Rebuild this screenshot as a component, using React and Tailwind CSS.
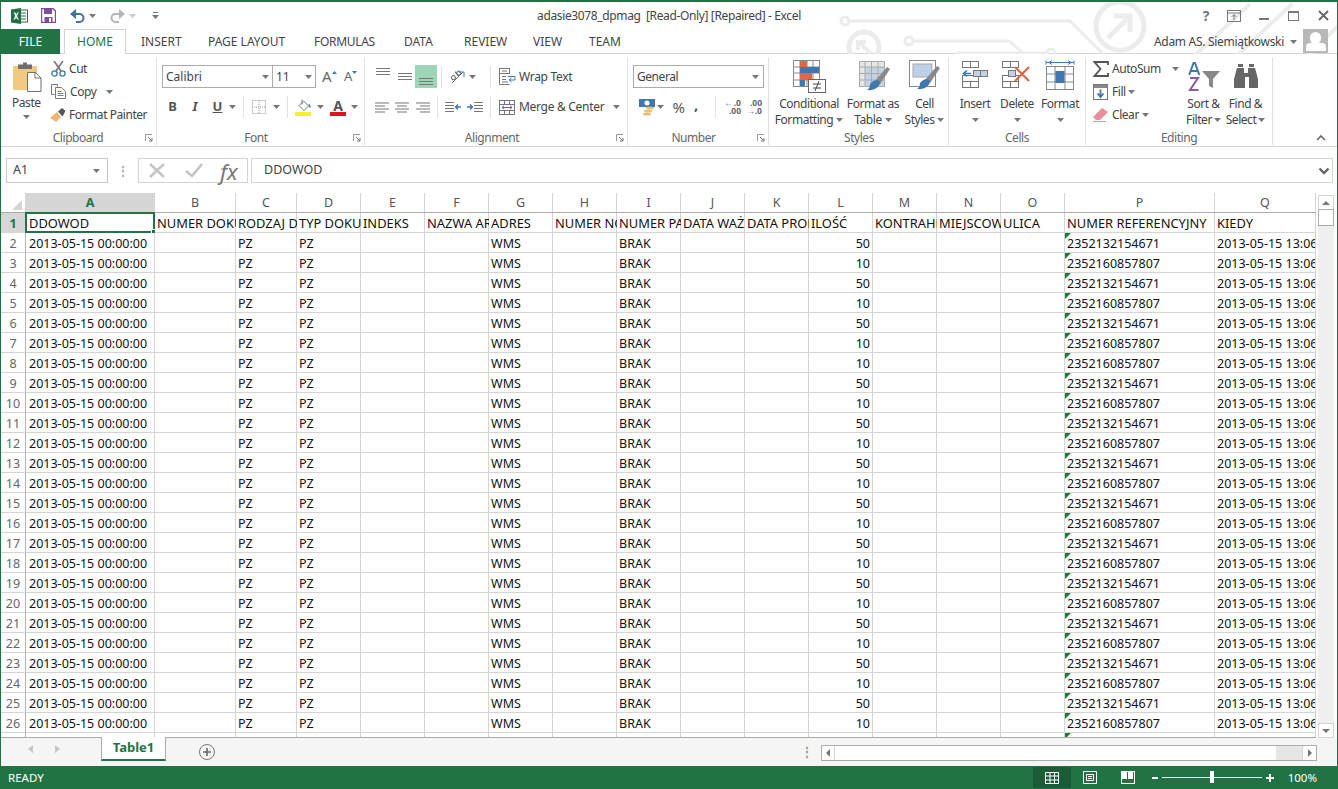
import React from "react";

const Caret = ({ className = "" }) => (
  <svg width="7" height="4" viewBox="0 0 7 4" className={"shrink-0 " + className}><path d="M0 0h7L3.5 4z" fill="#777" /></svg>
);
const Launcher = () => (
  <svg width="8" height="8" viewBox="0 0 8 8" className="shrink-0"><path d="M.5 7V.5H7" fill="none" stroke="#999" /><path d="M3 3l4 4M7 4v3H4" fill="none" stroke="#777" /></svg>
);
const VSep = ({ className = "" }) => <div className={"w-px h-[22px] bg-[#e1e1e1] shrink-0 " + className} />;

const Lines = ({ kind }) => {
  const rows = {
    left: [[0, 14], [0, 10], [0, 14], [0, 10]],
    center: [[0, 14], [2, 10], [0, 14], [2, 10]],
    right: [[0, 14], [4, 10], [0, 14], [4, 10]],
  }[kind];
  return (
    <svg width="14" height="11" viewBox="0 0 14 11">
      {rows.map(([x, w], i) => <rect key={i} x={x} y={i * 3 + 0.5} width={w} height="1" fill="#777" />)}
    </svg>
  );
};
const ThreeLines = () => (
  <svg width="14" height="7" viewBox="0 0 14 7"><path d="M0 .5h14M0 3.5h14M0 6.5h14" stroke="#777" /></svg>
);

const Excel = () => (
  <svg width="17" height="16" viewBox="0 0 17 16">
    <rect x="7" y="2" width="9.5" height="12" fill="#fff" stroke="#1e7145" />
    <path d="M10 5h5M10 8h5M10 11h5" stroke="#1e7145" />
    <path d="M0 1.5 10 0v16L0 14.5z" fill="#1e7145" />
    <path d="M2.6 4.5h1.7L5.2 6.7 6.2 4.5h1.6L6 8l1.9 3.6H6.2L5.1 9.2 4 11.6H2.4L4.3 8z" fill="#fff" />
  </svg>
);
const Save = () => (
  <svg width="15" height="15" viewBox="0 0 15 15">
    <path d="M.5.5h11.5l2.5 2.5v11.5H.5z" fill="#fff" stroke="#7d4e9f" strokeWidth="1.4" />
    <rect x="3" y="1" width="8" height="5" fill="#7d4e9f" />
    <rect x="3.5" y="9" width="8" height="5.5" fill="#7d4e9f" />
    <rect x="8" y="10" width="2" height="4" fill="#fff" />
  </svg>
);
const Undo = ({ c = "#44719e", flip }) => (
  <svg width="15" height="14" viewBox="0 0 15 14" className={flip ? "-scale-x-100" : ""}>
    <path d="M2 5h7.5a4 4 0 0 1 0 8H6" fill="none" stroke={c} strokeWidth="2" />
    <path d="M6 0v10L0 5z" fill={c} />
  </svg>
);
const Paste = () => (
  <svg width="29" height="31" viewBox="0 0 29 31">
    <rect x="0" y="5" width="24" height="24" rx="1" fill="#f1c983" />
    <path d="M5 3.5h5V1.5h4v2h5V8H5z" fill="#6f6f6f" />
    <path d="M14.5 11.5h8l5.5 5.5v13.5H14.5z" fill="#fff" stroke="#6f6f6f" />
    <path d="M22 11.5V17h6" fill="none" stroke="#6f6f6f" />
  </svg>
);
const Cut = () => (
  <svg width="15" height="16" viewBox="0 0 15 16">
    <path d="M3 0l7 10M12 0L5 10" stroke="#777" strokeWidth="1.6" />
    <circle cx="3.5" cy="12.5" r="2.6" fill="none" stroke="#3f78b0" strokeWidth="1.3" />
    <circle cx="11.5" cy="12.5" r="2.6" fill="none" stroke="#3f78b0" strokeWidth="1.3" />
  </svg>
);
const Copy = () => (
  <svg width="15" height="15" viewBox="0 0 15 15">
    <path d="M.5.5h6v2M.5.5v10h3" fill="none" stroke="#777" />
    <path d="M4.5 3.5h6l4 4v7h-10z" fill="#fff" stroke="#777" />
    <path d="M6.5 7.5h4M6.5 9.5h6M6.5 11.5h6" stroke="#5b86b1" />
  </svg>
);
const Painter = () => (
  <svg width="16" height="14" viewBox="0 0 16 14">
    <path d="M0 10 7 4l4 5-5 5C4 12 2 11 0 10z" fill="#eab672" />
    <path d="M8 3.5 12 0l3.5 3-3 5.5z" fill="#555" />
  </svg>
);
const Borders = () => (
  <svg width="14" height="14" viewBox="0 0 14 14">
    <rect x=".5" y=".5" width="13" height="13" fill="none" stroke="#999" strokeDasharray="1 1" />
    <path d="M7 0v14M0 7h14" stroke="#999" strokeDasharray="1 1" />
  </svg>
);
const FillColor = () => (
  <svg width="17" height="17" viewBox="0 0 17 17">
    <path d="M4 6.5 8.5 2l5 5L9 11.5z" fill="#fff" stroke="#777" />
    <path d="M7 .5v5" stroke="#777" />
    <path d="M13.5 4.5c2 1 2.5 3 2 4.5-1-.5-2-1.500-2-4.500z" fill="#4a7cb0" />
    <rect x="0" y="13" width="16" height="4" fill="#f5f02a" />
  </svg>
);
const FontColor = () => (
  <div className="flex flex-col items-center leading-none">
    <span className="text-[14px] font-bold h-[13px] leading-[13px] text-[#555]">A</span>
    <div className="w-[16px] h-[4px] bg-[#e3101a]" />
  </div>
);
const Orient = () => (
  <svg width="17" height="15" viewBox="0 0 17 15">
    <g transform="rotate(-40 7 7)" stroke="#666" fill="none">
      <circle cx="4" cy="6.500" r="2" />
      <path d="M9 3v5.500" />
      <circle cx="11" cy="6.500" r="2" />
    </g>
    <path d="M3 14 14 3" stroke="#666" />
    <path d="M10 3h5v5" fill="none" stroke="#4a7cb0" />
  </svg>
);
const Indent = ({ rev }) => (
  <svg width="16" height="11" viewBox="0 0 16 11" className={rev ? "-scale-x-100" : ""}>
    <path d="M7 .5h9M7 3.500h9M7 6.500h9M7 9.500h9" stroke="#777" />
    <path d="M0 5h5M3 2.500 5.500 5 3 7.500" fill="none" stroke="#3f78b0" strokeWidth="1.4" />
  </svg>
);
const Wrap = () => (
  <svg width="17" height="17" viewBox="0 0 17 17">
    <rect x=".5" y=".5" width="10" height="5" fill="#fff" stroke="#777" />
    <path d="M.5 5.500v11h10M3 3h5M3 8.500h4M3 11.500h4M3 14h6" fill="none" stroke="#777" />
    <path d="M9 8.500h7v3.500h-5M12.500 10 10 12l2.500 2" fill="none" stroke="#3f78b0" />
  </svg>
);
const Merge = () => (
  <svg width="16" height="15" viewBox="0 0 16 15">
    <rect x=".5" y=".5" width="15" height="14" fill="#fff" stroke="#777" />
    <path d="M0 4.500h16M0 10.500h16M5.500 0v4.500M10.500 0v4.500M5.500 10.500V15M10.500 10.500V15" stroke="#777" />
    <path d="M3 7.500h10M5 5.700 3 7.500l2 1.800M11 5.700l2 1.800-2 1.800" fill="none" stroke="#3f78b0" />
  </svg>
);
const Accounting = () => (
  <svg width="17" height="17" viewBox="0 0 17 17">
    <rect x="0" y="0" width="16" height="8" fill="#3f78b0" />
    <circle cx="8" cy="4" r="2.500" fill="#fff" />
    <ellipse cx="11" cy="9" rx="4" ry="1.500" fill="#e9c06f" />
    <ellipse cx="9" cy="12" rx="4" ry="1.500" fill="#e9c06f" />
    <ellipse cx="8" cy="15" rx="4" ry="1.500" fill="#e9c06f" />
  </svg>
);
const Dec = ({ more }) => (
  <div className="flex flex-col items-end text-[8.5px] leading-[8px] text-[#666] w-[16px] font-bold tracking-normal">
    <span className={"flex items-center " + (more ? "" : "gap-px")}>
      {more ? <span>.00</span> : <><span className="text-[#3f78b0]">←</span><span>.0</span></>}
    </span>
    <span className="flex items-center">
      {more ? <><span className="text-[#3f78b0]">→</span><span>.0</span></> : <span>.00</span>}
    </span>
  </div>
);

const Cond = () => (
  <svg width="33" height="33" viewBox="0 0 33 33">
    <g stroke="#888" fill="none"><rect x=".5" y=".5" width="26" height="26" fill="#fff" /><path d="M7 0v27M14 0v27M20 0v27M0 7h27M0 13h27M0 20h27" /></g>
    <rect x="7" y="1" width="7" height="6" fill="#d9694a" />
    <rect x="7" y="7" width="19" height="6" fill="#3f78b0" />
    <rect x="7" y="13" width="12" height="7" fill="#d9694a" />
    <rect x="7" y="20" width="5" height="6" fill="#3f78b0" />
    <rect x="15.500" y="19.500" width="17" height="13" fill="#fff" stroke="#666" />
    <path d="M20 24h8M20 28h8M22 31l4-10" stroke="#444" fill="none" />
  </svg>
);
const Brush = () => (
  <g>
    <path d="M16 20 28 6l3 2-10 15z" fill="#888" />
    <path d="M11 23c3-4 7-5 10 -2 0 5-6 9-13 8 2-1 3-3 3-6z" fill="#3f78b0" />
  </g>
);
const FormatTable = () => (
  <svg width="33" height="33" viewBox="0 0 33 33">
    <rect x=".5" y=".5" width="25" height="25" fill="#e6e6e6" stroke="#aaa" />
    <rect x="6" y="6" width="19" height="19" fill="#c3d3e6" />
    <path d="M6 0v26M12.500 0v26M19 0v26M0 6h26M0 12.500h26M0 19h26" stroke="#aaa" />
    <Brush />
  </svg>
);
const CellStyles = () => (
  <svg width="33" height="33" viewBox="0 0 33 33">
    <rect x=".5" y=".5" width="26" height="26" fill="#fff" stroke="#888" />
    <rect x="4" y="4" width="19" height="13" fill="#bcd0e8" stroke="#aaa" />
    <Brush />
  </svg>
);
const Ins = () => (
  <svg width="27" height="30" viewBox="0 0 27 30">
    <g fill="#fff" stroke="#777"><rect x=".5" y=".5" width="8" height="6" /><rect x="8.500" y=".5" width="8" height="6" /><rect x=".5" y="20.500" width="8" height="6" /><rect x="8.500" y="20.500" width="8" height="6" /><rect x=".5" y="14.500" width="16" height="6" fill="none" /></g>
    <rect x="11.500" y="9.500" width="7" height="6" fill="#c2d3e6" stroke="#777" />
    <rect x="18.500" y="9.500" width="7" height="6" fill="#c2d3e6" stroke="#777" />
    <path d="M2 12.500h7M5 9.500l-3.500 3 3.500 3" fill="none" stroke="#3f78b0" strokeWidth="1.600" />
  </svg>
);
const Del = () => (
  <svg width="30" height="30" viewBox="0 0 30 30">
    <g fill="#fff" stroke="#777"><rect x=".5" y=".5" width="8" height="6" /><rect x="8.500" y=".5" width="8" height="6" /><rect x=".5" y="20.500" width="8" height="6" /><rect x="8.500" y="20.500" width="8" height="6" /><rect x=".5" y="14.500" width="16" height="6" fill="none" /></g>
    <rect x="6.500" y="9.500" width="7" height="6" fill="#c2d3e6" stroke="#777" />
    <path d="M13 6l14 14M27 6 13 20" stroke="#d9694a" strokeWidth="2.200" />
  </svg>
);
const Fmt = () => (
  <svg width="30" height="33" viewBox="0 0 30 33">
    <path d="M1 2.500h28M1 .5v4M29 .5v4M4 2.500l3-2M4 2.500l3 2M26 2.500l-3-2M26 2.500l-3 2" stroke="#3f78b0" fill="none" />
    <rect x="1.500" y="6.500" width="27" height="23" fill="#fff" stroke="#888" />
    <path d="M10 6v24M20 6v24M1 14h28M1 22h28" stroke="#888" />
    <rect x="10.500" y="11" width="9" height="12" fill="#3f78b0" />
  </svg>
);
const Sigma = () => (
  <svg width="16" height="16" viewBox="0 0 16 16"><path d="M15 4V1H1.500l6 7-6 7H15v-3" fill="none" stroke="#555" strokeWidth="1.800" /></svg>
);
const FillI = () => (
  <svg width="15" height="16" viewBox="0 0 15 16">
    <rect x=".5" y=".5" width="14" height="15" fill="#fff" stroke="#777" />
    <rect x="1" y="1" width="13" height="3" fill="#888" />
    <path d="M7.500 5.500v7M4.500 9.500l3 3.500 3-3.500" fill="none" stroke="#3f78b0" strokeWidth="1.800" />
  </svg>
);
const Eraser = () => (
  <svg width="15" height="15" viewBox="0 0 15 15">
    <path d="M0 10 9 1l6 4-8 8H3z" fill="#e8909c" />
    <path d="M0 14.500h13" stroke="#aaa" />
  </svg>
);
const Sort = () => (
  <svg width="32" height="31" viewBox="0 0 32 31">
    <path d="M1.200 13 5.500 1h1.500L11.300 13M3 9h6.500" fill="none" stroke="#3f78b0" strokeWidth="2" />
    <path d="M2 16h8L2 28h8.500" fill="none" stroke="#8d5aa6" strokeWidth="2" />
    <path d="M14 9h18l-7 8v9l-4-2v-7z" fill="#888" />
  </svg>
);
const Binoc = () => (
  <svg width="26" height="27" viewBox="0 0 26 27" fill="#666">
    <path d="M5 1h5v3H5zM16 1h5v3h-5z" />
    <path d="M4 5h7v5h4V5h7l3 11v9h-9V14h-4v11H1v-9z" />
  </svg>
);

const colWidths = "grid grid-cols-[25px_129px_81px_61px_64px_64px_64px_64px_64px_64px_64px_64px_64px_64px_64px_64px_150px_101px]";
const letters = "ABCDEFGHIJKLMNOPQ".split("");
const heads = ["DDOWOD", "NUMER DOKUMENTU", "RODZAJ DOKUMENTU", "TYP DOKUMENTU", "INDEKS", "NAZWA ARTYKUŁU", "ADRES", "NUMER NOŚNIKA", "NUMER PARTII", "DATA WAŻNOŚCI", "DATA PRODUKCJI", "ILOŚĆ", "KONTRAHENT", "MIEJSCOWOŚĆ", "ULICA", "NUMER REFERENCYJNY", "KIEDY"];
const qty = [50, 10, 50, 10, 50, 10, 10, 50, 10, 50, 10, 50, 10, 50, 10, 50, 10, 50, 10, 50, 10, 50, 10, 50, 10];

const Cell = ({ children, className = "" }) => (
  <div className={"relative h-[20px] border-r border-b border-[#d4d4d4] overflow-hidden whitespace-nowrap text-[12.5px] text-[#111] " + className}>{children}</div>
);
const Tri = () => <svg width="6" height="6" viewBox="0 0 6 6" className="absolute left-0 top-0"><path d="M0 0h6L0 6z" fill="#1e7b34" /></svg>;

const DataRow = ({ n, q }) => {
  const cols = { 2: "PZ", 3: "PZ", 6: "WMS", 8: "BRAK" };
  return (
    <div className={colWidths}>
      <div className="h-[20px] border-r border-b border-[#d4d4d4] border-r-[#b5b5b5] text-center leading-[21px] text-[12.5px] text-[#666]">{n}</div>
      {letters.map((l, i) => {
        if (i === 0) return <Cell key={l} className="pl-[3px] leading-[22px]">2013-05-15 00:00:00</Cell>;
        if (i === 11) return <Cell key={l} className="text-right pr-[2px] leading-[22px]">{q}</Cell>;
        if (i === 15) return <Cell key={l} className="pl-[2px] leading-[22px]"><Tri />{q === 50 ? "2352132154671" : "2352160857807"}</Cell>;
        if (i === 16) return <Cell key={l} className="pl-[2px] leading-[22px]">2013-05-15 13:06:00</Cell>;
        return <Cell key={l} className="pl-[2px] leading-[22px]">{cols[i]}</Cell>;
      })}
    </div>
  );
};

export default function App() {
  return (
    <div className="w-[1338px] h-[789px] flex flex-col overflow-hidden bg-white border-x border-t-2 border-[#217346] font-['Noto_Sans','Open_Sans',sans-serif] text-[#444]">
      {/* title + tabs */}
      <div className="relative h-[52px] shrink-0 border-b border-[#d4d4d4]">
        <svg width="1338" height="52" viewBox="0 -2 1338 52" className="absolute left-[-1px] top-0" fill="none" stroke="#ececec" strokeWidth="3">
          <circle cx="845" cy="17" r="4" />
          <path d="M849 17h221l40 40" />
          <circle cx="864" cy="43" r="15" strokeWidth="5" />
          <path d="M871 50l-12-12M858 46v-8h8" strokeWidth="4" />
          <circle cx="909" cy="37" r="4" />
          <path d="M913 37h96l30 25" />
          <circle cx="1051" cy="49" r="4" />
          <path d="M1047 49h-89l-12 12" />
          <circle cx="1120" cy="22" r="24" strokeWidth="5" />
          <path d="M1108 34l22-22M1114 12h16v16" strokeWidth="5" />
          <path d="M1186 60 1250 0M1228 60l64-60M1300 60l50-50" strokeWidth="4" />
        </svg>
        <div className="relative h-[27px] grid grid-cols-[1fr_auto_1fr] items-center">
          <div className="flex items-center pl-[10px]">
            <Excel />
            <div className="ml-[13px]"><Save /></div>
            <div className="ml-[14px]"><Undo /></div>
            <Caret className="ml-[4px]" />
            <div className="ml-[14px]"><Undo c="#b5b5b5" flip /></div>
            <Caret className="ml-[4px] opacity-40" />
            <div className="ml-[16px] flex flex-col items-center gap-[2px]">
              <div className="w-[5px] h-px bg-[#777]" />
              <Caret />
            </div>
          </div>
          <div className="text-[12px] tracking-[-0.37px] text-[#444] whitespace-pre">adasie3078_dpmag  [Read-Only] [Repaired] - Excel</div>
          <div className="flex items-center justify-end pr-[8px] text-[#777]">
            <span className="text-[14px] font-bold w-[14px] text-center">?</span>
            <svg width="14" height="12" viewBox="0 0 14 12" className="ml-[14px]"><rect x=".5" y=".5" width="13" height="11" fill="none" stroke="#777" /><path d="M0 3h14M7 10V5M4.500 7 7 4.500 9.500 7" fill="none" stroke="#777" /></svg>
            <div className="w-[10px] h-[2px] bg-[#777] ml-[18px] mt-[6px]" />
            <div className="w-[11px] h-[10px] border border-t-2 border-[#777] ml-[19px]" />
            <svg width="11" height="11" viewBox="0 0 11 11" className="ml-[19px]"><path d="M1 1l9 9M10 1l-9 9" stroke="#666" strokeWidth="1.800" /></svg>
          </div>
        </div>
        <div className="relative h-[25px] flex text-[12px] text-[#444]">
          <div className="w-[59px] h-[25px] bg-[#217346] text-white flex items-center justify-center">FILE</div>
          <div className="ml-[4px] w-[62px] h-[25px] bg-white border border-b-0 border-[#d4d4d4] text-[#217346] flex items-center justify-center">HOME</div>
          <div className="ml-[15px] w-[37px] leading-[25px] h-[24px]">INSERT</div>
          <div className="ml-[30px] w-[78px] leading-[25px] h-[24px] whitespace-nowrap">PAGE LAYOUT</div>
          <div className="ml-[28px] w-[62px] leading-[25px] h-[24px] tracking-[-0.3px]">FORMULAS</div>
          <div className="ml-[28px] w-[32px] leading-[25px] h-[24px]">DATA</div>
          <div className="ml-[28px] w-[40px] leading-[25px] h-[24px]">REVIEW</div>
          <div className="ml-[29px] w-[28px] leading-[25px] h-[24px]">VIEW</div>
          <div className="ml-[28px] w-[32px] leading-[25px] h-[24px]">TEAM</div>
          <div className="flex-1 flex items-start justify-end">
            <span className="leading-[25px] whitespace-nowrap text-[#444] tracking-[-0.3px]">Adam AS. Siemiątkowski</span>
            <Caret className="ml-[6px] mt-[11px]" />
            <div className="ml-[6px] mr-[9px] w-[25px] h-[24px] bg-[#b8b8b8] flex flex-col items-center overflow-hidden">
              <div className="w-[11px] h-[12px] rounded-full bg-white mt-[3px]" />
              <div className="w-[20px] h-[8px] bg-white rounded-t-[4px] mt-[-1px]" />
            </div>
          </div>
        </div>
      </div>

      {/* ribbon */}
      <div className="h-[93px] shrink-0 flex border-b border-[#d4d4d4] bg-white text-[12px] tracking-[-0.45px] text-[#444] pt-[3px] pb-[1px]">
        {/* Clipboard */}
        <div className="w-[156px] shrink-0 flex flex-col border-r border-[#e1e1e1]">
          <div className="flex-1 min-h-0 flex pl-[12px]">
            <div className="w-[38px] flex flex-col items-start">
              <div className="mt-[4px]"><Paste /></div>
              <span className="leading-[14px] mt-[4px] -ml-px">Paste</span>
              <Caret className="ml-[10px] mt-[5px]" />
            </div>
            <div className="flex flex-col">
              <div className="h-[23px] flex items-center"><Cut /><span className="ml-[3px]">Cut</span></div>
              <div className="h-[23px] flex items-center"><Copy /><span className="ml-[4px]">Copy</span><Caret className="ml-[10px]" /></div>
              <div className="h-[23px] flex items-center -ml-[1px]"><Painter /><span className="ml-[3px] whitespace-nowrap">Format Painter</span></div>
            </div>
          </div>
          <div className="h-[14px] flex items-center pr-[3px] text-[#666]"><span className="flex-1 text-center pl-[10px]">Clipboard</span><Launcher /></div>
        </div>
        {/* Font */}
        <div className="w-[208px] shrink-0 flex flex-col border-r border-[#e1e1e1]">
          <div className="flex-1 min-h-0 flex flex-col pl-[5px] pt-[8px]">
            <div className="flex items-center h-[23px] tracking-normal">
              <div className="w-[111px] h-[23px] border border-[#ababab] flex items-center pl-[3px] pr-[3px] justify-between"><span>Calibri</span><Caret /></div>
              <div className="w-[43px] h-[23px] border border-l-0 border-[#ababab] flex items-center pl-[3px] pr-[3px] justify-between"><span>11</span><Caret /></div>
              <div className="ml-[6px] flex w-[22px] items-center text-[15px] text-[#666]">A<svg width="5" height="3" viewBox="0 0 5 3" className="mb-[8px]"><path d="M0 3h5L2.500 0z" fill="#3f78b0" /></svg></div>
              <div className="flex w-[20px] items-center text-[13px] text-[#666]">A<svg width="5" height="3" viewBox="0 0 5 3" className="mb-[8px]"><path d="M0 0h5L2.500 3z" fill="#3f78b0" /></svg></div>
            </div>
            <div className="flex items-center h-[22px] mt-[8px] tracking-normal">
              <span className="w-[21px] text-center font-bold text-[13px] text-[#555]">B</span>
              <span className="w-[24px] text-center italic text-[13px] text-[#555] font-['Liberation_Serif',serif] font-bold">I</span>
              <span className="w-[21px] text-center font-bold underline text-[13px] text-[#555]">U</span>
              <Caret className="ml-[1px]" />
              <VSep className="ml-[7px]" />
              <div className="ml-[8px]"><Borders /></div>
              <Caret className="ml-[7px]" />
              <VSep className="ml-[7px]" />
              <div className="ml-[7px]"><FillColor /></div>
              <Caret className="ml-[5px]" />
              <div className="ml-[6px]"><FontColor /></div>
              <Caret className="ml-[5px]" />
            </div>
          </div>
          <div className="h-[14px] flex items-center pr-[3px] text-[#666]"><span className="flex-1 text-center pl-[2px]">Font</span><Launcher /></div>
        </div>
        {/* Alignment */}
        <div className="w-[263px] shrink-0 flex flex-col border-r border-[#e1e1e1]">
          <div className="flex-1 min-h-0 flex pt-[8px] pl-[7px]">
            <div className="w-[119px] flex flex-col">
              <div className="flex items-center h-[23px]">
                <div className="w-[22px] flex justify-center items-start self-stretch pt-[3px]"><ThreeLines /></div>
                <div className="w-[22px] flex justify-center items-center self-stretch"><ThreeLines /></div>
                <div className="w-[22px] bg-[#9fd5b7] flex justify-center items-end self-stretch pb-[3px]"><ThreeLines /></div>
                <VSep className="ml-[4px]" />
                <div className="ml-[7px]"><Orient /></div>
                <Caret className="ml-[3px]" />
                <VSep className="ml-[14px]" />
              </div>
              <div className="flex items-center h-[22px] mt-[8px]">
                <div className="w-[22px] flex justify-center"><Lines kind="left" /></div>
                <div className="w-[22px] flex justify-center"><Lines kind="center" /></div>
                <div className="w-[22px] flex justify-center"><Lines kind="right" /></div>
                <VSep className="ml-[4px]" />
                <div className="ml-[7px]"><Indent rev /></div>
                <div className="ml-[6px]"><Indent /></div>
                <VSep className="ml-[7px]" />
              </div>
            </div>
            <div className="flex flex-col pl-[8px]">
              <div className="flex items-center h-[23px]"><Wrap /><span className="ml-[3px] whitespace-nowrap tracking-[-0.3px]">Wrap Text</span></div>
              <div className="flex items-center h-[22px] mt-[8px]"><Merge /><span className="ml-[4px] whitespace-nowrap tracking-[-0.3px]">Merge &amp; Center</span><Caret className="ml-[9px]" /></div>
            </div>
          </div>
          <div className="h-[14px] flex items-center pr-[3px] text-[#666]"><span className="flex-1 text-center pl-[3px]">Alignment</span><Launcher /></div>
        </div>
        {/* Number */}
        <div className="w-[141px] shrink-0 flex flex-col border-r border-[#e1e1e1]">
          <div className="flex-1 min-h-0 flex flex-col pl-[5px] pt-[8px]">
            <div className="w-[131px] h-[23px] border border-[#ababab] flex items-center pl-[3px] pr-[4px] justify-between"><span>General</span><Caret /></div>
            <div className="flex items-center h-[22px] mt-[8px]">
              <div className="ml-[6px]"><Accounting /></div>
              <Caret className="ml-[1px]" />
              <span className="ml-[7px] text-[15px] w-[15px] text-center text-[#555]">%</span>
              <span className="ml-[8px] text-[15px] w-[8px] font-bold text-[#555] leading-none -mt-[6px]">,</span>
              <VSep className="ml-[13px]" />
              <div className="ml-[9px]"><Dec /></div>
              <div className="ml-[5px]"><Dec more /></div>
            </div>
          </div>
          <div className="h-[14px] flex items-center pr-[3px] text-[#666]"><span className="flex-1 text-center pl-[2px]">Number</span><Launcher /></div>
        </div>
        {/* Styles */}
        <div className="w-[180px] shrink-0 flex flex-col border-r border-[#e1e1e1]">
          <div className="flex-1 min-h-0 flex leading-[16px] text-center pl-[6px]">
            <div className="w-[68px] flex flex-col items-center">
              <div className="h-[37px] pt-[3px]"><Cond /></div>
              <span className="mt-[2px]">Conditional</span>
              <span className="flex items-center gap-[3px]">Formatting<Caret /></span>
            </div>
            <div className="w-[60px] flex flex-col items-center">
              <div className="h-[37px] pt-[4px] pl-[5px]"><FormatTable /></div>
              <span className="mt-[2px] whitespace-nowrap">Format as</span>
              <span className="flex items-center gap-[3px]">Table<Caret /></span>
            </div>
            <div className="w-[43px] flex flex-col items-center">
              <div className="h-[37px] pt-[3px] pl-[1px]"><CellStyles /></div>
              <span className="mt-[2px]">Cell</span>
              <span className="flex items-center gap-[3px]">Styles<Caret /></span>
            </div>
          </div>
          <div className="h-[14px] flex items-center justify-center text-[#666] pl-[1px]">Styles</div>
        </div>
        {/* Cells */}
        <div className="w-[137px] shrink-0 flex flex-col border-r border-[#e1e1e1]">
          <div className="flex-1 min-h-0 flex leading-[16px] pl-[7px]">
            <div className="w-[38px] flex flex-col items-center">
              <div className="h-[37px] pt-[4px]"><Ins /></div>
              <span className="mt-[2px]">Insert</span>
              <Caret className="mt-[6px]" />
            </div>
            <div className="w-[46px] flex flex-col items-center">
              <div className="h-[37px] pt-[4px]"><Del /></div>
              <span className="mt-[2px]">Delete</span>
              <Caret className="mt-[6px]" />
            </div>
            <div className="w-[40px] flex flex-col items-center">
              <div className="h-[37px] pt-[3px]"><Fmt /></div>
              <span className="mt-[2px]">Format</span>
              <Caret className="mt-[6px]" />
            </div>
          </div>
          <div className="h-[14px] flex items-center justify-center text-[#666]">Cells</div>
        </div>
        {/* Editing */}
        <div className="w-[187px] shrink-0 flex flex-col border-r border-[#e1e1e1]">
          <div className="flex-1 min-h-0 flex pl-[7px]">
            <div className="w-[90px] flex flex-col">
              <div className="h-[23px] flex items-center"><Sigma /><span className="ml-[3px]">AutoSum</span><Caret className="ml-[11px]" /></div>
              <div className="h-[23px] flex items-center"><FillI /><span className="ml-[4px]">Fill</span><Caret className="ml-[2px]" /></div>
              <div className="h-[23px] flex items-center"><Eraser /><span className="ml-[4px]">Clear</span><Caret className="ml-[3px]" /></div>
            </div>
            <div className="w-[41px] flex flex-col items-center leading-[16px]">
              <div className="h-[37px] pt-[5px]"><Sort /></div>
              <span className="mt-[2px] whitespace-nowrap">Sort &amp;</span>
              <span className="flex items-center gap-[2px]">Filter<Caret /></span>
            </div>
            <div className="w-[43px] flex flex-col items-center leading-[16px]">
              <div className="h-[37px] pt-[6px]"><Binoc /></div>
              <span className="mt-[2px] whitespace-nowrap">Find &amp;</span>
              <span className="flex items-center gap-[2px]">Select<Caret /></span>
            </div>
          </div>
          <div className="h-[14px] flex items-center justify-center text-[#666]">Editing</div>
        </div>
        <div className="flex-1 flex items-end justify-end pr-[11px] pb-[4px]">
          <svg width="10" height="6" viewBox="0 0 10 6"><path d="M1 5l4-4 4 4" fill="none" stroke="#666" strokeWidth="1.600" /></svg>
        </div>
      </div>

      {/* formula bar */}
      <div className="h-[46px] shrink-0 flex items-start pt-[11px] pl-[5px] text-[12px] text-[#444]">
        <div className="w-[102px] h-[25px] border border-[#c6c6c6] flex items-center justify-between pl-[6px] pr-[7px] text-[12.5px]"><span>A1</span><Caret /></div>
        <div className="w-[30px] h-[25px] flex items-center justify-center text-[#aaa] font-bold tracking-tighter">⋮</div>
        <div className="w-[110px] h-[25px] border border-[#d4d4d4] flex items-center pl-[9px]">
          <svg width="18" height="15" viewBox="0 0 18 15"><path d="M2 1l14 13M16 1 2 14" stroke="#c4c4c4" strokeWidth="2.400" /></svg>
          <svg width="20" height="15" viewBox="0 0 20 15" className="ml-[18px]"><path d="M2 8l6 5L18 1" fill="none" stroke="#c4c4c4" strokeWidth="2.600" /></svg>
          <span className="ml-[16px] font-['Liberation_Serif',serif] italic font-normal text-[22px] text-[#777] leading-none">fx</span>
        </div>
        <div className="ml-[3px] w-[1082px] h-[25px] border border-[#d4d4d4] flex items-center justify-between pl-[12px] pr-[2px] text-[12.5px]">
          <span>DDOWOD</span>
          <svg width="12" height="8" viewBox="0 0 12 8"><path d="M1.500 1.500 6 6l4.500-4.500" fill="none" stroke="#666" strokeWidth="2.400" /></svg>
        </div>
      </div>

      {/* sheet */}
      <div className="flex-1 min-h-0 flex overflow-hidden">
        <div className="w-[1315px] shrink-0 flex flex-col overflow-hidden border-b border-[#ababab]">
          <div className={colWidths + " h-[20px] shrink-0 border-b border-[#ababab]"}>
            <div className="border-r border-[#d4d4d4] flex items-end justify-end pr-[3px] pb-[2px]">
              <svg width="10" height="10" viewBox="0 0 10 10"><path d="M10 0v10H0z" fill="#d4d4d4" /></svg>
            </div>
            {letters.map((l) => (
              <div key={l} className={"border-r border-[#d4d4d4] text-center leading-[19px] text-[12.5px] " + (l === "A" ? "bg-[#d6d6d6] text-[#217346] font-bold" : "text-[#555]")}>{l}</div>
            ))}
          </div>
          <div className={colWidths}>
            <div className="h-[20px] bg-[#d6d6d6] border-r border-[#b5b5b5] text-center leading-[21px] text-[12.5px] font-bold text-[#217346]">1</div>
            {heads.map((h, i) => (
              <Cell key={h} className={"!overflow-visible !text-[12.9px] leading-[20px] " + (i === 0 ? "pl-[3px]" : "pl-[2px]")}>
                <div className={"overflow-hidden -mr-[1px]"}>{h}</div>
                {i === 0 && (
                  <div className="absolute -left-[1px] -top-[1px] w-[130px] h-[21px] border-2 border-[#217346]">
                    <div className="absolute -right-[3px] -bottom-[3px] w-[5px] h-[5px] bg-[#217346] border border-white" />
                  </div>
                )}
              </Cell>
            ))}
          </div>
          {qty.map((q, i) => <DataRow key={i} n={i + 2} q={q} />)}
          <div className={colWidths + " h-[5px] overflow-hidden shrink-0"}>
            <div className="border-r border-[#b5b5b5]" />
            {letters.map((l, i) => (
              <div key={l} className="relative border-r border-[#d4d4d4]">{i === 15 && <Tri />}</div>
            ))}
          </div>
        </div>
        <div className="w-[21px] shrink-0 pl-[2px] pt-[2px] flex flex-col">
          <div className="flex-1 flex flex-col w-[16px] bg-[#f0f0f0]">
            <div className="h-[15px] bg-white border border-[#d4d4d4] flex items-center justify-center"><svg width="8" height="4" viewBox="0 0 8 4"><path d="M0 4h8L4 0z" fill="#777" /></svg></div>
            <div className="h-[17px] bg-white border border-[#ababab] -mt-px" />
            <div className="flex-1" />
            <div className="h-[15px] bg-white border border-[#d4d4d4] flex items-center justify-center"><svg width="8" height="4" viewBox="0 0 8 4"><path d="M0 0h8L4 4z" fill="#777" /></svg></div>
          </div>
        </div>
      </div>

      {/* sheet tabs */}
      <div className="h-[28px] shrink-0 bg-[#f5f5f5] flex items-start text-[12px]">
        <div className="w-[100px] h-[22px] flex items-center pl-[27px] gap-[22px]">
          <svg width="5" height="8" viewBox="0 0 5 8"><path d="M5 0v8L0 4z" fill="#c8c8c8" /></svg>
          <svg width="5" height="8" viewBox="0 0 5 8"><path d="M0 0v8l5-4z" fill="#c8c8c8" /></svg>
        </div>
        <div className="w-[65px] h-[24px] -mt-px bg-white border-x border-[#ababab] border-b-2 border-b-[#217346] flex items-center justify-center font-bold text-[13px] text-[#217346]">Table1</div>
        <div className="ml-[33px] mt-[6px] w-[16px] h-[16px] border border-[#777] rounded-full flex items-center justify-center">
          <svg width="10" height="10" viewBox="0 0 10 10"><path d="M5 1v8M1 5h8" stroke="#666" strokeWidth="1.600" /></svg>
        </div>
        <div className="ml-[586px] mt-[7px] w-[6px] text-center text-[#999] leading-[14px] font-bold">⋮</div>
        <div className="ml-[14px] mt-[7px] w-[496px] h-[16px] border border-[#ababab] flex">
          <div className="w-[13px] border-r border-[#d4d4d4] flex items-center justify-center bg-white"><svg width="4" height="8" viewBox="0 0 4 8"><path d="M4 0v8L0 4z" fill="#777" /></svg></div>
          <div className="w-[441px] bg-white" />
          <div className="flex-1 bg-[#e6e6e6]" />
          <div className="w-[14px] border-l border-[#d4d4d4] flex items-center justify-center bg-white"><svg width="4" height="8" viewBox="0 0 4 8"><path d="M0 0v8l4-4z" fill="#777" /></svg></div>
        </div>
      </div>

      {/* status bar */}
      <div className="h-[23px] shrink-0 bg-[#217346] flex items-center text-[11.5px] text-white -mx-px px-[8px]">
        <span>READY</span>
        <div className="flex-1" />
        <div className="w-[38px] h-[21px] bg-[#1a5c38] flex items-center justify-center">
          <svg width="14" height="12" viewBox="0 0 14 12"><path d="M.5.500h13v11H.500zM5 .5v11M9.500 .5v11M0 4h14M0 8h14" fill="none" stroke="#fff" /></svg>
        </div>
        <svg width="14" height="13" viewBox="0 0 14 13" className="ml-[12px]"><path d="M.5.500h13v12H.500zM3.500 3.500h7v6h-7zM5 5.500h4M5 7.500h4" fill="none" stroke="#fff" /></svg>
        <div className="ml-[24px] w-[14px] h-[13px] border border-white flex">
          <div className="w-[5px] h-[7px] bg-white" />
          <div className="w-px" />
          <div className="w-[5px] h-[7px] bg-white" />
        </div>
        <div className="ml-[17px] w-[6px] h-[2px] bg-white" />
        <div className="ml-[4px] w-[100px] h-[9px] relative flex items-center">
          <div className="w-full h-px bg-white" />
          <div className="absolute left-[48px] -top-[2px] w-[4px] h-[12px] bg-white" />
        </div>
        <svg width="8" height="8" viewBox="0 0 8 8" className="ml-[4px]"><path d="M4 0v8M0 4h8" stroke="#fff" strokeWidth="2" /></svg>
        <span className="ml-[14px] mr-[13px]">100%</span>
      </div>
    </div>
  );
}
